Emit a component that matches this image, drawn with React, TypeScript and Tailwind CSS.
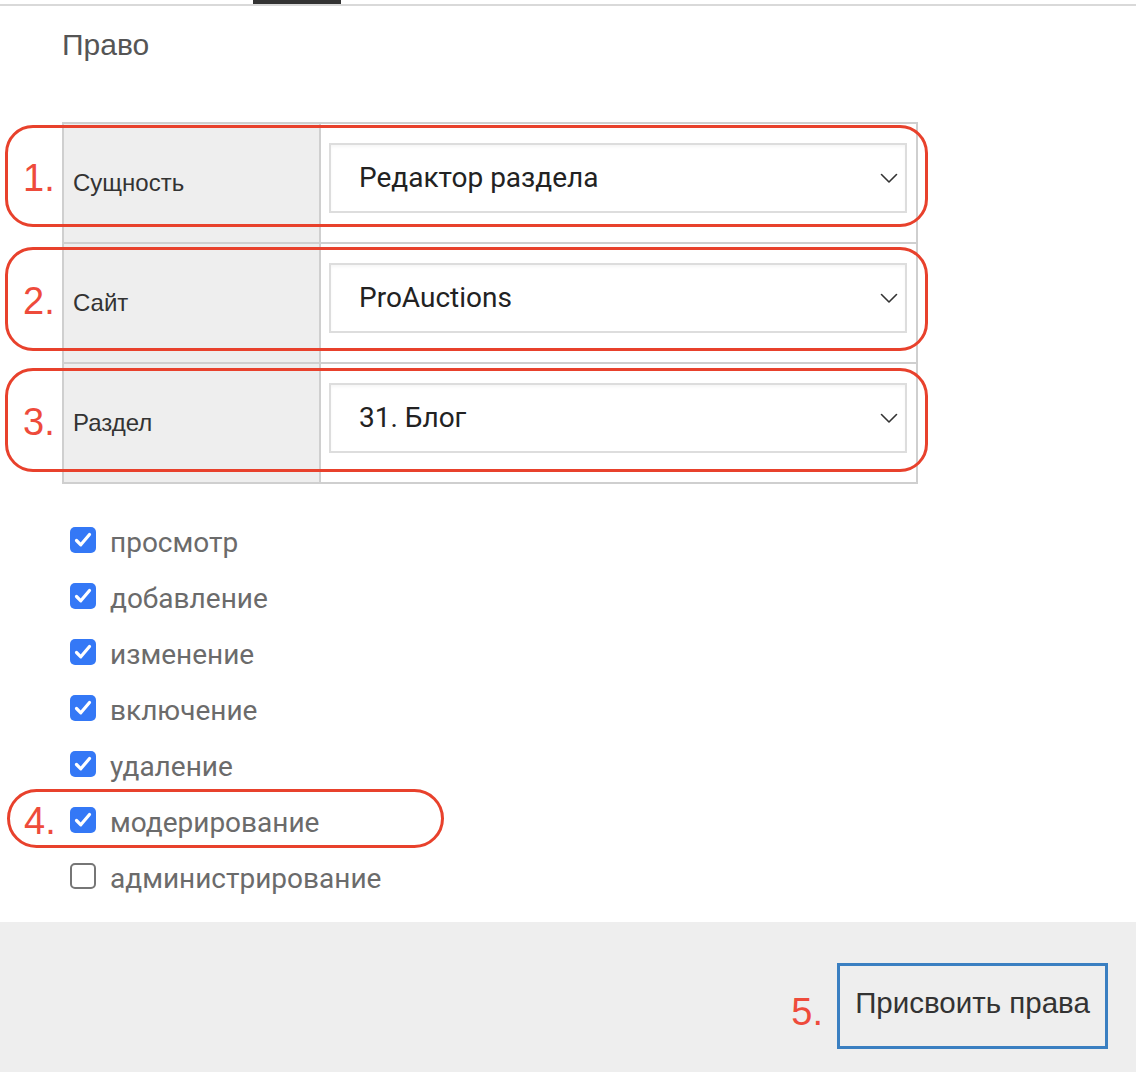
import React from "react";

const rows = [
  { n: "1.", label: "Сущность", value: "Редактор раздела", top: 1, h: 102 },
  { n: "2.", label: "Сайт", value: "ProAuctions", top: 3, h: 104 },
  { n: "3.", label: "Раздел", value: "31. Блог", top: 4, h: 104 },
];

const perms = [
  { t: "просмотр", c: true },
  { t: "добавление", c: true },
  { t: "изменение", c: true },
  { t: "включение", c: true },
  { t: "удаление", c: true },
  { t: "модерирование", c: true, mark: true },
  { t: "администрирование", c: false },
];

function Chevron() {
  return (
    <svg width="18" height="11" viewBox="0 0 18 11" fill="none">
      <path d="M1.5 1.5 L9 9 L16.5 1.5" stroke="#333" strokeWidth="1.6" strokeLinecap="round" strokeLinejoin="round" />
    </svg>
  );
}

function Check({ on }: { on: boolean }) {
  if (!on)
    return <div className="w-[26px] h-[26px] rounded-[5px] border-2 border-[#767676] bg-white shrink-0" />;
  return (
    <div className="w-[26px] h-[26px] rounded-[5px] bg-[#3478f6] flex items-center justify-center shrink-0">
      <svg width="26" height="26" viewBox="0 0 26 26" fill="none">
        <path d="M6.5 13.5 L10.8 17.8 L19.5 7.5" stroke="white" strokeWidth="3.2" strokeLinecap="round" strokeLinejoin="round" />
      </svg>
    </div>
  );
}

export default function App() {
  return (
    <div className="w-[1136px] h-[1072px] bg-white flex flex-col overflow-hidden font-['Liberation_Sans',Arial,sans-serif]">
      <div className="h-[6px] border-b-2 border-[#d9d9d9] shrink-0">
        <div className="ml-[253px] w-[88px] h-[4px] bg-[#333]" />
      </div>

      <div className="pl-[62px] pt-[24px] text-[30px] leading-[30px] text-[#555]">Право</div>

      <div className="ml-[62px] mt-[62px] w-[856px] border-t-2 border-l-2 border-r-2 border-[#cfcfcf]">
        {rows.map((r) => (
          <div key={r.n} className="relative flex h-[120px] border-b-2 border-[#cfcfcf]">
            <div className="w-[257px] shrink-0 bg-[#eee] border-r-2 border-[#cfcfcf] flex items-center pl-[9px] text-[24px] text-[#333]">
              {r.label}
            </div>
            <div className="flex-1 bg-white pt-[19px] pl-[8px] pr-[9px]">
              <div className="h-[70px] border-2 border-[#ddd] flex items-center justify-between pl-[28px] pr-[7px] font-['Roboto',sans-serif] text-[28px] text-[#222] shadow-[inset_0_2px_3px_rgba(0,0,0,0.04)]">
                <span>{r.value}</span>
                <Chevron />
              </div>
            </div>
            <div
              className="absolute left-[-59px] w-[923px] border-[3px] border-[#e8412c] rounded-[28px] flex items-center pl-[15px] pointer-events-none"
              style={{ top: r.top, height: r.h }}
            >
              <span className="text-[38px] leading-none text-[#ee4b3b] pt-[4px]">{r.n}</span>
            </div>
          </div>
        ))}
      </div>

      <div className="mt-[28px] pl-[70px] flex flex-col">
        {perms.map((p) => (
          <div key={p.t} className="relative h-[56px] flex items-center gap-[14px]">
            <Check on={p.c} />
            <span className="font-['Roboto',sans-serif] text-[28px] text-[#6b6b6b] leading-none pt-[5px]">{p.t}</span>
            {p.mark && (
              <div className="absolute left-[-63px] top-[-3px] w-[437px] h-[59px] border-[3px] border-[#e8412c] rounded-[30px] flex items-center pl-[14px] pointer-events-none">
                <span className="text-[38px] leading-none text-[#ee4b3b] pt-[4px]">4.</span>
              </div>
            )}
          </div>
        ))}
      </div>

      <div className="mt-[18px] flex-1 bg-[#eee] flex justify-end items-start pt-[41px] pr-[28px]">
        <div className="relative">
          <span className="absolute right-full mr-[14px] top-[30px] text-[38px] leading-none text-[#ee4b3b]">5.</span>
          <button className="w-[271px] h-[86px] border-[3px] border-[#3a7fc1] bg-[#eee] text-[29.5px] text-[#333] pb-[6px] font-['Liberation_Sans',Arial,sans-serif]">
            Присвоить права
          </button>
        </div>
      </div>
    </div>
  );
}
